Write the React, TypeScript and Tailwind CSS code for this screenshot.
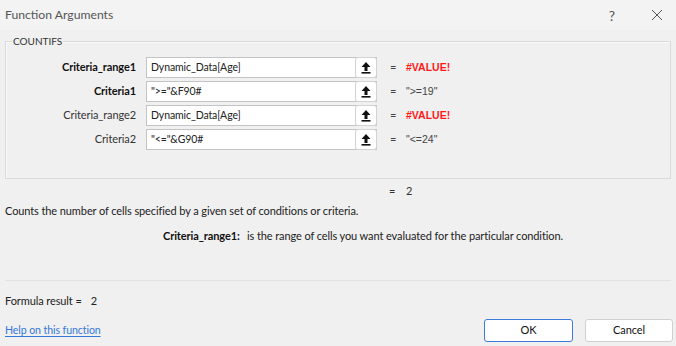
import React from 'react';

type Arg = {
  label: string
  bold: boolean
  value: string
  result: string
  error: boolean
};

const args: Arg[] = [
  { label: 'Criteria_range1', bold: true, value: 'Dynamic_Data[Age]', result: '#VALUE!', error: true },
  { label: 'Criteria1', bold: true, value: '">="&F90#', result: '">=19"', error: false },
  { label: 'Criteria_range2', bold: false, value: 'Dynamic_Data[Age]', result: '#VALUE!', error: true },
  { label: 'Criteria2', bold: false, value: '"<="&G90#', result: '"<=24"', error: false },
];

function RefIcon() {
  return (
    <svg width="10" height="12" viewBox="0 0 10 12">
      <polygon points="5,0 9.5,5 6.5,5 6.5,9 3.5,9 3.5,5 0.5,5" fill="#111" />
      <rect x="0.5" y="10" width="9" height="1.6" fill="#111" />
    </svg>
  );
}

function ArgRow({ arg }: { arg: Arg }) {
  return (
    <div className="flex items-center h-[21px]">
      <div className={"w-[130px] text-right " + (arg.bold ? 'font-bold text-[#111]' : 'text-[#333]')}>{arg.label}</div>
      <div className="ml-[10px] w-[231px] h-[21px] flex bg-white border border-[#c4c4c4]">
        <div className="flex-1 pl-[4px] flex items-center text-[10.5px] text-[#222] whitespace-nowrap">{arg.value}</div>
        <div className="w-[22px] -my-[1px] -mr-[1px] flex items-center justify-center bg-white border border-[#d2d2d2] rounded-[3px]">
          <RefIcon />
        </div>
      </div>
      <div className="ml-[13px] w-[16px] text-[#444]">=</div>
      <div className={"font-['Liberation_Sans',sans-serif] text-[10.5px] tracking-normal " + (arg.error ? 'font-bold text-[#ff1a1a]' : 'text-[#444]')}>{arg.result}</div>
    </div>
  );
}

export default function App() {
  return (
    <div className="w-[676px] h-[346px] overflow-hidden bg-[#f0f0f0] text-[11px] tracking-[-0.1px] text-[#222] font-['Segoe_UI','Lato',sans-serif] flex flex-col">
      {/* title bar */}
      <div className="h-[30px] shrink-0 flex items-center bg-[#f3f3f3] pl-[5px]">
        <span className="text-[12.2px] tracking-normal text-[#555]">Function Arguments</span>
        <span className="ml-auto text-[14px] text-[#555] mr-[36px]">?</span>
        <svg width="12" height="12" viewBox="0 0 12 12" className="mr-[13px]">
          <path d="M1 1L11 11M11 1L1 11" stroke="#555" strokeWidth="1" />
        </svg>
      </div>

      {/* group box */}
      <div className="relative mx-[5px] mt-[11px] h-[138px] shrink-0 border border-[#dadada] shadow-[inset_1px_1px_0_#fafafa]">
        <span className="absolute -top-[8px] left-[6px] px-[1px] bg-[#f0f0f0] text-[10px] tracking-normal text-[#333] leading-[14px]">COUNTIFS</span>
        <div className="pt-[15px] flex flex-col gap-[3px]">
          {args.map(a => <ArgRow key={a.label} arg={a} />)}
        </div>
      </div>

      <div className="h-[22px] mt-[1px] flex items-center pl-[389px] text-[#333]">
        <span className="w-[17px]">=</span>
        <span>2</span>
      </div>
      <div className="h-[18px] flex items-center pl-[5px] text-[#222]">
        Counts the number of cells specified by a given set of conditions or criteria.
      </div>
      <div className="h-[32px] flex items-center pl-[163px] text-[#222]">
        <span className="font-bold text-[#111] w-[84px] whitespace-nowrap">Criteria_range1:</span>
        <span>is the range of cells you want evaluated for the particular condition.</span>
      </div>

      <div className="mt-[28px] mx-[5px] border-t border-[#e2e2e2]" />

      <div className="mt-[13px] h-[14px] flex items-center pl-[5px] text-[#222]">
        Formula result =<span className="ml-[9px]">2</span>
      </div>

      <div className="mt-[11px] flex items-center pl-[5px] pr-[3px]">
        <a href="#" className="text-[10.6px] text-[#3478d8] underline underline-offset-2">Help on this function</a>
        <button className="ml-auto w-[89px] h-[23px] bg-white border border-[#3d7bd6] rounded-[3px] text-[#111]">OK</button>
        <button className="ml-[12px] w-[88px] h-[23px] bg-white border border-[#d0d0d0] rounded-[3px] text-[#111]">Cancel</button>
      </div>
    </div>
  );
}
